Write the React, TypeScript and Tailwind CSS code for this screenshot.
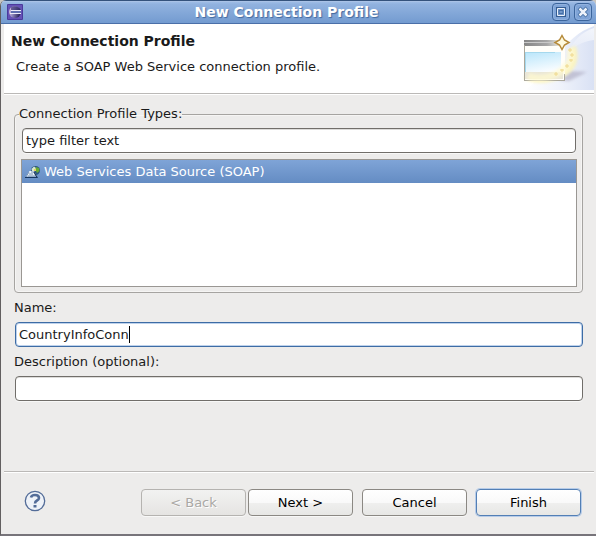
import { useState } from "react";
import type { ReactNode } from "react";

function EclipseIcon() {
  return (
    <svg width="16" height="16" viewBox="0 0 16 16" aria-hidden="true">
      <defs>
        <linearGradient id="moon" x1="0" y1="0" x2="1" y2="0.3">
          <stop offset="0" stopColor="#f2d3e4" />
          <stop offset="0.4" stopColor="#9c93c8" />
          <stop offset="1" stopColor="#2c2560" />
        </linearGradient>
      </defs>
      <rect width="16" height="16" rx="1" fill="#4b3a9c" />
      <rect x="1" y="1" width="14" height="14" fill="#6551b6" />
      <circle cx="8" cy="8" r="6" fill="url(#moon)" />
      <path d="M4 3.500Q8 0.500 12.500 4.500L13.500 6H4Z" fill="#2f2868" opacity="0.6" />
      <path d="M4 6.500h10M3 9.500h11" stroke="#eceaf7" strokeWidth="1" />
      <path d="M4 8h10" stroke="#5f6db0" strokeWidth="2" />
    </svg>
  );
}

function WizardBanner() {
  return (
    <svg width="75" height="66" viewBox="0 0 75 66" aria-hidden="true">
      <defs>
        <linearGradient id="fade" x1="0" y1="0" x2="1" y2="0">
          <stop offset="0" stopColor="#ffffff" />
          <stop offset="0.5" stopColor="#f0f3fb" />
          <stop offset="1" stopColor="#d9e1f4" />
        </linearGradient>
        <linearGradient id="swoosh" x1="0" y1="1" x2="1" y2="0">
          <stop offset="0" stopColor="#ffffff" stopOpacity="0" />
          <stop offset="1" stopColor="#ffffff" stopOpacity="0.7" />
        </linearGradient>
        <linearGradient id="bar" x1="0" y1="0" x2="1" y2="0">
          <stop offset="0" stopColor="#858585" />
          <stop offset="0.6" stopColor="#a6a6a6" />
          <stop offset="1" stopColor="#f3f1e6" />
        </linearGradient>
        <linearGradient id="pane" x1="0.3" y1="0" x2="0.6" y2="1">
          <stop offset="0" stopColor="#bde7fb" />
          <stop offset="1" stopColor="#fbfdff" />
        </linearGradient>
        <filter id="soft" x="-50%" y="-50%" width="200%" height="200%">
          <feGaussianBlur stdDeviation="1.500" />
        </filter>
      </defs>
      <path d="M75 2C60 7 48 18 38 32C28 46 18 58 6 66H75Z" fill="url(#fade)" />
      <path d="M75 4C62 8 54 17 50 28C58 20 66 17 75 16Z" fill="url(#swoosh)" />
      <path d="M40 56L52 47L68 48L50 57Z" fill="#a9a6bd" opacity="0.6" filter="url(#soft)" />
      <path d="M54 23Q60 42 42 51Q22 60 6 52" fill="none" stroke="#fff5b4" strokeWidth="6" opacity="0.8" filter="url(#soft)" />
      <rect x="5" y="16" width="41" height="40" fill="#fffefa" />
      <rect x="5" y="16" width="38" height="6" fill="url(#bar)" />
      <path d="M5 18.500H36" stroke="#c9c9c9" />
      <rect x="6" y="28" width="36" height="20" fill="url(#pane)" />
      <path d="M7 28.500H36M6.500 28V48" stroke="#a5d8ed" />
      <rect x="6" y="48" width="38" height="7" fill="#e9e6d8" />
      <path d="M5.500 21V56M5 56.500H46M45.500 50V56" stroke="#aaa79b" />
      <path d="M51 25Q55 40 38 50Q20 57 9 52" fill="none" stroke="#fff9cf" strokeWidth="7" opacity="0.75" filter="url(#soft)" />
      <path d="M51 24v4M49 26h4M53 29v4M51 31h4M52 35v3M50 36h4M48 40v4M46 42h4M43 45v3M41 46h4M37 48v4M35 50h4" stroke="#efd98e" strokeWidth="1" />
      <path d="M43 11.500L45.500 16L50 18.500L45.500 21L43 25.500L40.500 21L36 18.500L40.500 16Z" fill="#fffae0" stroke="#b58a3a" strokeWidth="1.500" />
    </svg>
  );
}

function DataSourceIcon() {
  return (
    <svg width="16" height="16" viewBox="0 0 16 16" aria-hidden="true">
      <circle cx="10.500" cy="6.500" r="4.500" fill="#2b557d" />
      <path d="M6.500 5L9 2.500L11 4L10 7L7 7Z" fill="#d7e8cf" />
      <path d="M11 3L14 4L14.500 7L12 9L10.500 6Z" fill="#67a934" />
      <path d="M9 5h2v2h-2z" fill="#e7d45c" />
      <path d="M1 12.500L4.500 7H9L12 12.500Z" fill="#edf4fa" />
      <path d="M1 13L4 8M4 10H8M3 12H10M6 8L9 8" stroke="#7894b4" />
      <path d="M0 13.500H12L9 8" fill="none" stroke="#17365f" strokeWidth="1.200" />
    </svg>
  );
}

function TitleButton({ label, children }: { label: string; children: ReactNode }) {
  return (
    <button
      type="button"
      aria-label={label}
      className="flex size-[18px] items-center justify-center rounded border border-[#3c659c] bg-[#7fa4d7] shadow-[inset_0_0_0_1px_#91b2df]"
    >
      <svg width="12" height="12" viewBox="0 0 12 12" aria-hidden="true">
        {children}
      </svg>
    </button>
  );
}

const field =
  "block h-[25px] w-full rounded border bg-white px-[3px] text-[13px] text-[#1a1a1a] outline-none";
const plain = "border-[#716e6a] shadow-[inset_0_1px_0_#dddcda,0_1px_0_#f8f8f7]";
const button = "h-[27px] w-[105px] rounded border text-[13px]";
const raised =
  "bg-[linear-gradient(#ffffff,#f9f9f9_50%,#efefee_52%,#e7e7e5)] text-black";
const neutral = "border-[#8b8883] shadow-[0_1px_0_#f8f8f7]";

export default function App() {
  const [filter, setFilter] = useState("type filter text");
  const [name, setName] = useState("CountryInfoConn");
  const [description, setDescription] = useState("");

  return (
    <div className="bg-[#c8c5c0] font-['DejaVu_Sans',sans-serif] text-[13px] leading-4 text-[#1a1a1a]">
      <main className="flex min-h-screen flex-col overflow-hidden rounded-t-md border-b-2 border-l border-b-[#77747a] border-l-[#625f60] bg-[#edeceb]">
        <header className="grid h-6 grid-cols-[40px_1fr_64px] items-center border-t border-b border-t-[#34527c] border-b-[#4a6fa8] bg-[linear-gradient(#a3c0e8,#91b2df_15%,#739bd0)] shadow-[inset_0_1px_0_#a9c2e6]">
          <span className="pl-[6px]"><EclipseIcon /></span>
          <h1 className="text-center text-sm leading-4 font-bold text-white [text-shadow:1px_1px_1px_#42699f]">New Connection Profile</h1>
          <span className="flex justify-end gap-1 pr-1">
            <TitleButton label="Maximize">
              <path d="M2.500 2.500h7v7h-7z" fill="none" stroke="#355d93" strokeWidth="3" />
              <path d="M2.500 2.500h7v7h-7z" fill="#7398ca" stroke="#edf3fb" />
              <path d="M4 4.500h4v3h-4z" fill="none" stroke="#456ea5" />
            </TitleButton>
            <TitleButton label="Close">
              <path d="M2 2L10 10M10 2L2 10" stroke="#426b9f" strokeWidth="4" />
              <path d="M2.500 2.500L9.500 9.500M9.500 2.500L2.500 9.500" stroke="#edf3fb" strokeWidth="2.500" />
            </TitleButton>
          </span>
        </header>

        <section className="mr-0.5 ml-[3px] flex h-[70px] shrink-0 justify-between border-b border-[#bbb9b7] bg-white shadow-[0_1px_0_#ffffff]">
          <div className="pt-[9px] pl-[7px]">
            <h2 className="text-sm leading-4 font-bold">New Connection Profile</h2>
            <p className="mt-[10px] pl-[5px]">Create a SOAP Web Service connection profile.</p>
          </div>
          <WizardBanner />
        </section>

        <form className="flex grow flex-col" onSubmit={(event) => event.preventDefault()}>
          <div className="grow pt-[11px] pr-[13px] pl-[13px]">
            <fieldset className="min-w-0 rounded border border-[#a6a4a1] pr-[5px] pb-[5px] pl-[6px] shadow-[inset_0_0_0_1px_#f6f5f4]">
              <legend className="-ml-[2px] h-[18px] leading-[18px]">Connection Profile Types:</legend>
              <div className="px-px pt-[5px]">
                <input aria-label="Filter profile types" className={`${field} ${plain}`} value={filter} onChange={(event) => setFilter(event.target.value)} />
              </div>
              <div role="listbox" aria-label="Connection profile types" className="mt-[6px] h-32 border border-[#9a9793] bg-white">
                <div role="option" aria-selected="true" className="flex h-[23px] items-center gap-[3px] bg-[linear-gradient(#7fa4d7,#648cc3)] pl-[3px] text-white">
                  <DataSourceIcon />
                  <span>Web Services Data Source (SOAP)</span>
                </div>
              </div>
            </fieldset>

            <label htmlFor="name" className="flex h-[29px] items-center">Name:</label>
            <div className="relative pl-px">
              <input id="name" className={`${field} border-[#3d6ca5] shadow-[inset_0_0_0_1px_#bed2ec]`} value={name} onChange={(event) => setName(event.target.value)} />
              <span className="absolute inset-y-1 left-[5px] border-r border-black text-transparent" aria-hidden="true">{name}</span>
            </div>

            <label htmlFor="description" className="flex h-[29px] items-center">Description (optional):</label>
            <div className="pl-px">
              <input id="description" className={`${field} ${plain}`} value={description} onChange={(event) => setDescription(event.target.value)} />
            </div>
          </div>

          <footer className="mr-0.5 ml-[3px] flex h-[63px] items-center border-t border-[#bbb9b7] pr-[13px] pb-px pl-5 shadow-[inset_0_1px_0_#ffffff]">
            <button type="button" aria-label="Help" className="rounded-full pb-1">
              <svg width="22" height="22" viewBox="0 0 22 22" className="block" aria-hidden="true">
                <circle cx="11" cy="11" r="9.700" fill="#eef2f8" stroke="#536c98" strokeWidth="1.300" />
                <path d="M7 7.500Q7.500 5 11 5Q15 5 15 8Q15 9.500 13 10.500Q11 11.500 11 13.500" fill="none" stroke="#536c98" strokeWidth="2.600" />
                <path d="M9.500 15h3v2.500h-3z" fill="#536c98" />
              </svg>
            </button>
            <div className="ml-auto flex">
              <button type="button" disabled className={`${button} border-[#b5b3b0] bg-[linear-gradient(#f2f2f1,#e5e4e2)] text-[#aaa8a5] shadow-[0_1px_0_#f8f8f7] [text-shadow:1px_1px_0_#ffffff]`}>&lt; Back</button>
              <button type="button" className={`${button} ${raised} ${neutral} ml-0.5`}>Next &gt;</button>
              <button type="button" className={`${button} ${raised} ${neutral} ml-[9px]`}>Cancel</button>
              <button type="submit" className={`${button} ${raised} ml-[9px] border-[#537fb5] shadow-[0_0_0_1px_#b7cce8]`}>Finish</button>
            </div>
          </footer>
        </form>
      </main>
    </div>
  );
}
